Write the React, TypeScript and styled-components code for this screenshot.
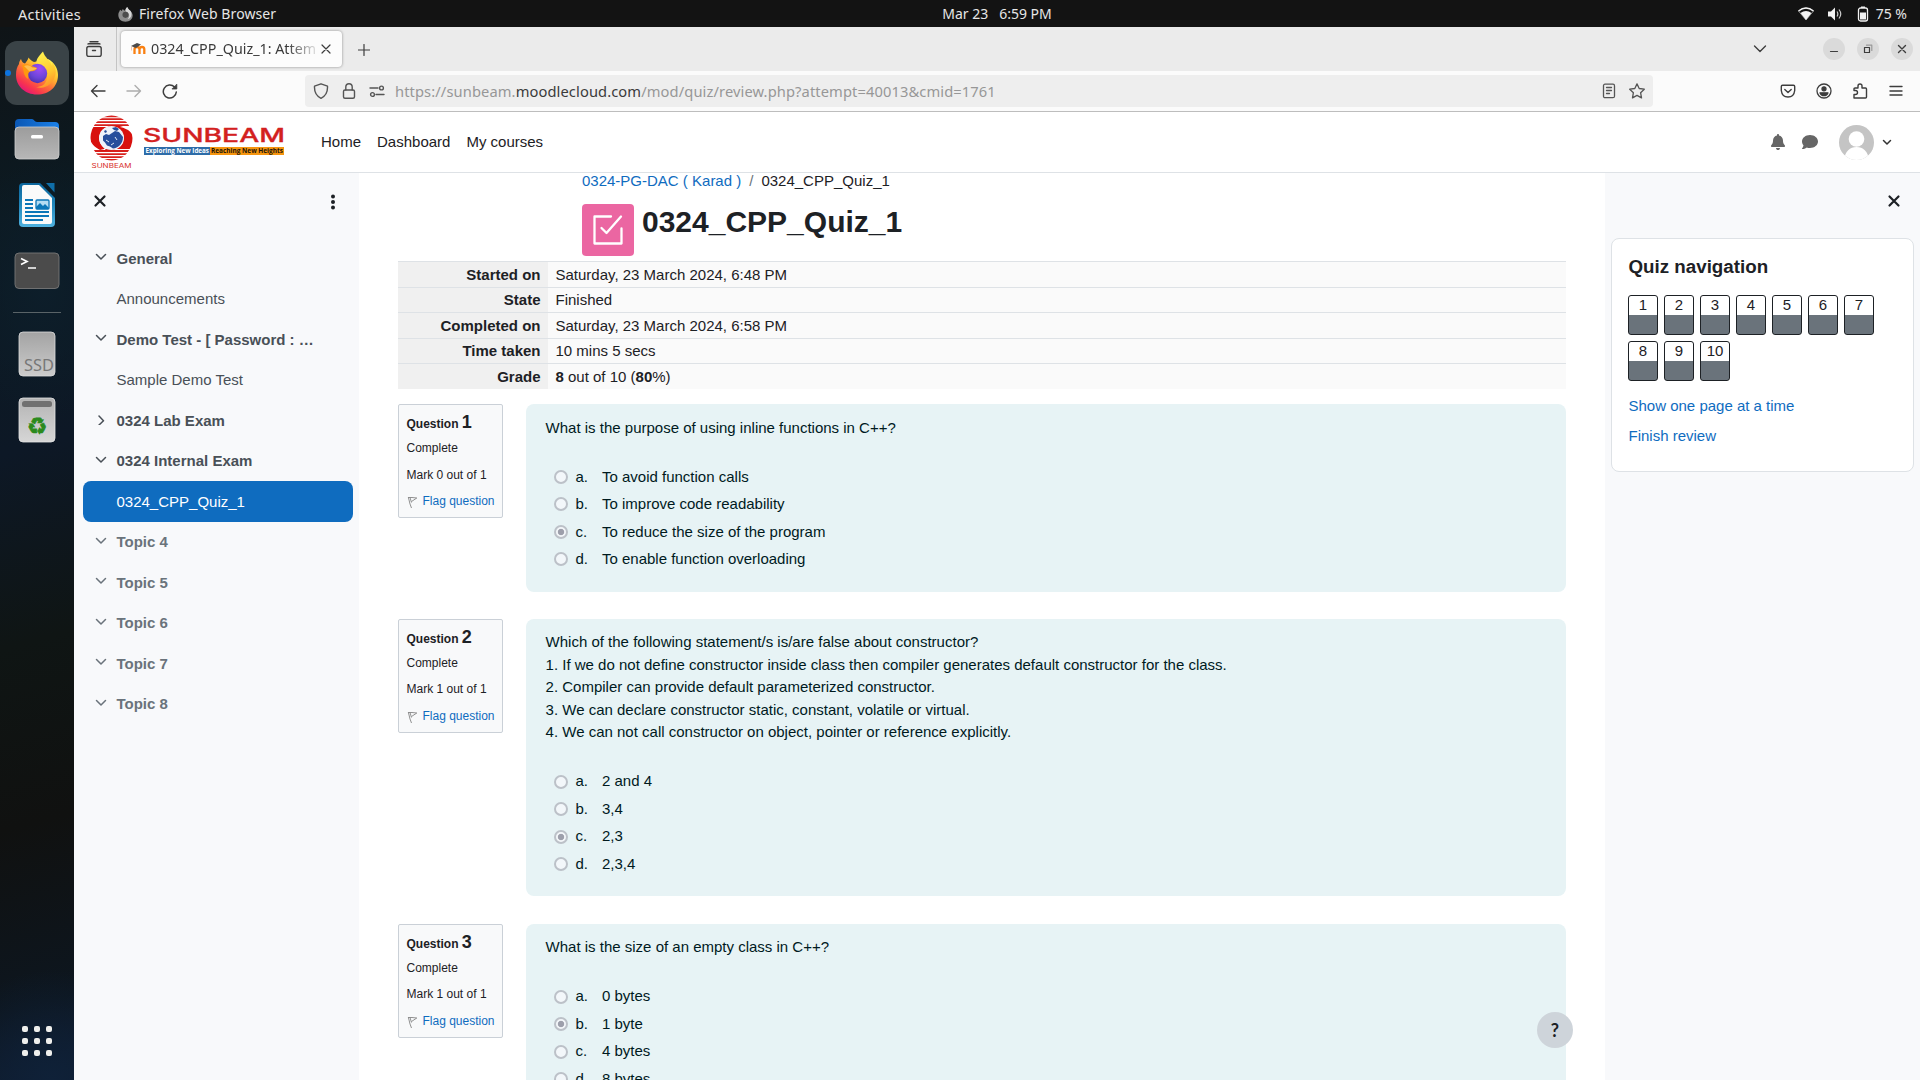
import React from "react";
import styled, { createGlobalStyle, css } from "styled-components";
import { FaBell, FaComment } from "react-icons/fa6";

const GlobalStyle = createGlobalStyle`
  * { box-sizing: border-box; }
  html, body { margin: 0; padding: 0; }
  body {
    font-family: "Liberation Sans", Arial, sans-serif;
    font-size: 15px;
    line-height: 22.5px;
    color: #1d2125;
    background: #fff;
    overflow: hidden;
  }
`;

const uiFont = css`
  font-family: "Noto Sans", "Open Sans", sans-serif;
  white-space: pre;
`;

/* ---------- desktop ---------- */

const Desktop = styled.div`
  width: 1920px;
  height: 1080px;
  display: flex;
  flex-direction: column;
  overflow: hidden;
`;

const TopBar = styled.header`
  ${uiFont}
  height: 27px;
  flex: none;
  display: grid;
  grid-template-columns: 1fr auto 1fr;
  align-items: center;
  padding: 1px 13px 0 18px;
  background: #131313;
  color: #e6e6e6;
  font-size: 14px;
`;

const TopBarGroup = styled.div<{ $gap: number; $end?: boolean }>`
  display: flex;
  align-items: center;
  gap: ${(p) => p.$gap}px;
  justify-content: ${(p) => (p.$end ? "flex-end" : "flex-start")};
  height: 26px;
`;

const TopLabel = styled.span<{ $spacing?: number; $size?: number }>`
  font-size: ${(p) => p.$size ?? 14}px;
  letter-spacing: ${(p) => p.$spacing ?? 0}px;
`;

/* The clock is centred over the area to the right of the dock. */
const Clock = styled(TopLabel)`
  padding-left: 69px;
`;

const AppName = styled.span`
  display: flex;
  align-items: center;
  gap: 6px;
`;

const Body = styled.div`
  flex: 1;
  min-height: 0;
  display: flex;
`;

const Dock = styled.nav`
  width: 74px;
  flex: none;
  display: flex;
  flex-direction: column;
  align-items: center;
  padding: 14px 0 21px;
  background:
    radial-gradient(ellipse 90px 130px at 60% 25%, #0d1e2a 0%, transparent 100%),
    radial-gradient(ellipse 110px 110px at 70% 100%, #0f2138 0%, transparent 100%),
    linear-gradient(165deg, #0f1417 0%, #0c1a22 18%, #0d1826 40%, #0f1514 58%, #101110 75%, #0d161f 92%, #0e1c30 100%);
`;

const DockTile = styled.div<{ $active?: boolean }>`
  position: relative;
  width: 64px;
  height: ${(p) => (p.$active ? 64 : 66)}px;
  margin-bottom: ${(p) => (p.$active ? 1 : 0)}px;
  display: flex;
  align-items: center;
  justify-content: center;
  border-radius: 12px;
  background: ${(p) => (p.$active ? "#3a4347" : "transparent")};
`;

const RunningDot = styled.i`
  position: absolute;
  left: 0;
  top: 29px;
  width: 6px;
  height: 6px;
  border-radius: 50%;
  background: #0c73df;
`;

const DockDivider = styled.hr`
  width: 48px;
  height: 1px;
  margin: 8px 0;
  border: 0;
  background: #596367;
`;

const AppGrid = styled.div`
  margin-top: auto;
  display: grid;
  grid-template-columns: repeat(3, 6px);
  gap: 6px;
  padding-bottom: 3px;
`;

const AppDot = styled.i`
  width: 6px;
  height: 6px;
  border-radius: 2px;
  background: #efefec;
`;

/* ---------- browser ---------- */

const Browser = styled.div`
  flex: 1;
  min-width: 0;
  display: flex;
  flex-direction: column;
`;

const TabStrip = styled.div`
  ${uiFont}
  height: 44px;
  flex: none;
  display: flex;
  align-items: center;
  background: #ebebeb;
  color: #3a3a3a;
`;

const ViewCell = styled.div`
  width: 43px;
  height: 44px;
  display: flex;
  align-items: center;
  padding-left: 12px;
  border-right: 1px solid #c4c4c4;
`;

const Tab = styled.div`
  width: 221px;
  height: 36px;
  margin-left: 4px;
  display: flex;
  align-items: center;
  padding: 0 9px;
  border-radius: 4px;
  background: #fcfcfc;
  box-shadow: 0 0 3px rgba(0, 0, 0, 0.4);
`;

const TabTitle = styled.span`
  width: 170px;
  flex: none;
  margin-left: 5px;
  padding-top: 1px;
  font-size: 14.3px;
  mask-image: linear-gradient(to left, transparent, #000 34px);
`;

const Spacer = styled.div`
  flex: 1;
`;

const WindowControls = styled.div`
  display: flex;
  gap: 12px;
  margin: 0 7px 0 56px;
`;

const WindowButton = styled.span`
  width: 22px;
  height: 22px;
  border-radius: 50%;
  background: #dadada;
  display: flex;
  align-items: center;
  justify-content: center;
`;

const NewTab = styled.span`
  display: flex;
  margin: 1px 0 0 16px;
`;

const Toolbar = styled.div`
  ${uiFont}
  height: 41px;
  flex: none;
  display: flex;
  align-items: center;
  padding: 0 16px;
  background: #fbfbfb;
  border-bottom: 1px solid #bdbdbd;
`;

const ToolGroup = styled.div`
  display: flex;
  gap: 20px;
`;

const UrlBar = styled.div`
  width: 1348px;
  height: 32px;
  margin: 0 127px;
  display: flex;
  align-items: center;
  gap: 12px;
  padding: 0 8px;
  border-radius: 4px;
  background: #eeeeee;
`;

const Url = styled.span`
  flex: 1;
  margin-left: -2px;
  padding-top: 1px;
  font-size: 14.7px;
  letter-spacing: 0.1px;
  color: #979797;
  b { font-weight: 400; color: #3b3b3b; }
`;

/* ---------- moodle page ---------- */

const Page = styled.div`
  flex: 1;
  min-height: 0;
  display: flex;
  flex-direction: column;
  position: relative;
`;

const Navbar = styled.div`
  height: 61px;
  flex: none;
  display: flex;
  align-items: center;
  padding: 0 28px 0 16px;
  border-bottom: 1px solid #dee2e6;
  background: #fff;
`;

const Brand = styled.div`
  display: flex;
  gap: 9px;
`;

const NavLinks = styled.nav`
  display: flex;
  gap: 16px;
  margin-left: 35px;
`;

const NavIcons = styled.div`
  margin-left: auto;
  display: flex;
  align-items: center;
  color: #666;
`;

const NavIcon = styled.span<{ $right: number }>`
  display: flex;
  margin-right: ${(p) => p.$right}px;
`;

const Columns = styled.div`
  flex: 1;
  min-height: 0;
  display: flex;
`;

const Drawer = styled.aside<{ $width: number }>`
  width: ${(p) => p.$width}px;
  flex: none;
  background: #f8f9fb;
`;

const DrawerHead = styled.div<{ $end?: boolean }>`
  height: 65px;
  display: flex;
  align-items: flex-start;
  justify-content: ${(p) => (p.$end ? "flex-end" : "space-between")};
  padding: ${(p) => (p.$end ? "20px 18px 0 0" : "20px 18px 0 18px")};
`;

const CourseIndex = styled.div`
  padding: 0 6px 0 9px;
`;

const IndexItem = styled.div<{ $bold?: boolean; $dim?: boolean; $active?: boolean }>`
  height: 40.5px;
  display: flex;
  align-items: center;
  padding: 1px 0 0 12px;
  border-radius: 8px;
  background: ${(p) => (p.$active ? "#0f6cbf" : "transparent")};
  color: ${(p) => (p.$active ? "#fff" : p.$dim ? "#6a737b" : "#495057")};
  font-weight: ${(p) => (p.$bold ? 700 : 400)};
`;

const ChevronSlot = styled.span`
  width: 21.5px;
  display: flex;
  margin-top: -3px;
`;

const Main = styled.main`
  flex: 1;
  min-width: 0;
  overflow: hidden;
  padding: 0 39px;
`;

const HeadBlock = styled.div`
  padding-left: 184px;
  height: 88px;
`;

const Breadcrumb = styled.div`
  display: flex;
  gap: 8px;
  height: 31px;
  line-height: 15px;
`;

const Link = styled.a`
  color: #0f6cbf;
`;

const Slash = styled.span`
  color: #6a737b;
`;

const TitleRow = styled.div`
  display: flex;
  gap: 8px;
`;

const ActivityIcon = styled.span`
  width: 52px;
  height: 52px;
  border-radius: 4px;
  background: #eb66a2;
  display: flex;
  align-items: center;
  justify-content: center;
`;

const Title = styled.h1`
  margin: 0;
  font-size: 30px;
  line-height: 36px;
  font-weight: 700;
`;

const Summary = styled.div`
  display: grid;
  grid-template-columns: 150px 1fr;
  grid-auto-rows: 25.5px;
  margin-bottom: 15.7px;
`;

const SummaryCell = styled.div<{ $label?: boolean }>`
  padding: 1.5px 7.5px 0;
  border-top: 1px solid #dee2e6;
  background: ${(p) => (p.$label ? "#f0f0f0" : "#fafafa")};
  text-align: ${(p) => (p.$label ? "right" : "left")};
  font-weight: ${(p) => (p.$label ? 700 : 400)};
`;

const QuestionRow = styled.section`
  display: flex;
  align-items: flex-start;
  gap: 23px;
  margin-bottom: 27.3px;
`;

const Info = styled.div`
  width: 105px;
  height: 114px;
  flex: none;
  padding: 6px 7.5px;
  border: 1px solid #cad0d7;
  border-radius: 2px;
  background: #f8f9fa;
  font-size: 12px;
  line-height: 18px;
  white-space: nowrap;
`;

const InfoNumber = styled.h3`
  margin: 0;
  height: 28px;
  font-size: 12px;
  line-height: 22px;
  b { font-size: 18px; }
`;

const InfoLine = styled.div`
  height: 26.5px;
  display: flex;
  align-items: flex-start;
  gap: 5px;
`;

const FlagSlot = styled.span`
  display: flex;
  padding-top: 4px;
`;

const Formulation = styled.div`
  flex: 1;
  min-width: 0;
  padding: 12.5px 20px 18.5px 19.6px;
  border-radius: 8px;
  background: #e7f3f5;
  color: #001a1e;
`;

const Prompt = styled.div`
  margin-bottom: 24px;
`;

const Option = styled.div`
  height: 27.5px;
  display: flex;
  align-items: center;
  padding-left: 8.4px;
`;

const Radio = styled.span<{ $on: boolean }>`
  width: 14px;
  height: 14px;
  margin-right: 7.5px;
  border-radius: 50%;
  border: 2px solid #bcc1c8;
  background: ${(p) => (p.$on ? "radial-gradient(circle, #9d9fab 2.8px, #f3f6f9 3.6px)" : "#f3f7fa")};
`;

const OptionLetter = styled.span`
  width: 26.5px;
`;

const NavCard = styled.div`
  width: 303px;
  height: 234px;
  margin-left: 6px;
  padding: 17px 16px;
  border: 1px solid #dee2e6;
  border-radius: 8px;
  background: #fff;
`;

const NavTitle = styled.h5`
  margin: 0 0 16px;
  padding-left: 0.5px;
  font-size: 18.75px;
  line-height: 22.5px;
`;

const NavGrid = styled.div`
  display: grid;
  grid-template-columns: repeat(7, 30px);
  gap: 6px;
  margin-bottom: 14px;
`;

const NavButton = styled.span`
  height: 40px;
  border: 1px solid #1d2125;
  border-radius: 3px;
  text-align: center;
  line-height: 18.5px;
  background: linear-gradient(#fff 19px, #6a737b 19px);
`;

const NavLinkRow = styled.div`
  height: 30px;
  padding-left: 0.5px;
`;

const HelpButton = styled.span`
  position: absolute;
  left: 1463px;
  top: 900px;
  width: 36px;
  height: 36px;
  border-radius: 50%;
  background: #ced4da;
  color: #1d2125;
  font: 700 18px/36px "Lato", sans-serif;
  text-align: center;
`;

/* ---------- drawings ---------- */

const Line = ({ size = 16, d, color = "#3d3d3d", w = 1.2, children }: {
  size?: number; d?: string; color?: string; w?: number; children?: React.ReactNode;
}) => (
  <svg width={size} height={size} viewBox={`0 0 ${size} ${size}`} fill="none" stroke={color} strokeWidth={w} strokeLinecap="round" strokeLinejoin="round">
    {d && <path d={d} />}
    {children}
  </svg>
);

const FirefoxIcon = () => (
  <svg width="44" height="44" viewBox="0 0 44 44">
    <defs>
      <linearGradient id="ffBody" x1="0.85" y1="0.1" x2="0.2" y2="0.95">
        <stop offset="0" stopColor="#fff34f" />
        <stop offset="0.3" stopColor="#ffbe2e" />
        <stop offset="0.55" stopColor="#ff7139" />
        <stop offset="0.8" stopColor="#f8364d" />
        <stop offset="1" stopColor="#e3147b" />
      </linearGradient>
      <radialGradient id="ffGlobe" cx="0.6" cy="0.25" r="0.8">
        <stop offset="0" stopColor="#a04bf5" />
        <stop offset="0.6" stopColor="#6b45d8" />
        <stop offset="1" stopColor="#4a2fae" />
      </radialGradient>
      <linearGradient id="ffFlame" x1="0.4" y1="0" x2="0.7" y2="1">
        <stop offset="0" stopColor="#fff04d" />
        <stop offset="0.6" stopColor="#ffc62f" />
        <stop offset="1" stopColor="#ff8b2b" />
      </linearGradient>
    </defs>
    <path d="M6 8c1 3 2 4 4 4.500C12 10 13 8.500 13.500 6.500C15 9 17 10 19 11L33 8C40 12 43 18 43 24C43 36 34 43.500 22 43.500C10 43.500 1 35 1 24C1 19 2 16 4 13C4 11 5 9 6 8Z" fill="url(#ffBody)" />
    <path d="M28 0.500C25 4 20.500 8 21.500 13C25 14 33 18 32 27C31 34 26 36 21 36C30 39 38 33 40 25C42 20 40 15 37 11C37.500 13 37.500 14 37 15C35 9 30 7 28 0.500Z" fill="url(#ffFlame)" />
    <circle cx="22.500" cy="22.500" r="9.700" fill="url(#ffGlobe)" />
    <path d="M7 14C11 12.500 14 13 16 15C18 15.500 20 16 22 17C21 20 18 20 15 20.500C12 22 14 26 13 28C8 25 9 19 7 14Z" fill="#ff980e" />
    <path d="M9 15C13 13 16 15 17 16.500L22 17C20 19.500 16 19 14.500 20.500Z" fill="#ffbd4f" />
  </svg>
);

const FirefoxMono = () => (
  <svg width="15" height="15" viewBox="0 0 44 44">
    <path d="M6 8L11 12L14 6L19 11L27 0C30 8 43 14 43 24C43 36 34 43 22 43S1 35 1 24C1 19 2 16 4 13Z" fill="#8d8d8d" />
    <path d="M27 0C21 5 22 12 25 14C36 20 34 30 28 36C40 33 42 22 37 12C34 9 29 6 27 0Z" fill="#d9d9d9" />
    <circle cx="22" cy="23" r="9" fill="#4c4c4c" />
  </svg>
);

const FilesIcon = () => (
  <svg width="46" height="42" viewBox="0 0 46 42">
    <defs>
      <linearGradient id="fold" x1="0" y1="0" x2="0" y2="1"><stop offset="0" stopColor="#9c9c9c" /><stop offset="1" stopColor="#b7b7b7" /></linearGradient>
      <linearGradient id="foldBack" x1="0" y1="0" x2="1" y2="0"><stop offset="0" stopColor="#0b57b4" /><stop offset="1" stopColor="#1a80e8" /></linearGradient>
    </defs>
    <path d="M1 5a4 4 0 0 1 4-4h13c2 0 2.500 3 5 3h18a4 4 0 0 1 4 4v12H1z" fill="url(#foldBack)" />
    <rect x="1" y="9" width="44" height="32" rx="4" fill="url(#fold)" stroke="#cfcfcf" strokeWidth="0.800" />
    <rect x="17" y="17" width="12" height="3.500" rx="1.500" fill="#fff" />
  </svg>
);

const WriterIcon = () => (
  <svg width="38" height="46" viewBox="0 0 38 46">
    <defs><linearGradient id="wr" x1="0" y1="0" x2="0" y2="1"><stop offset="0" stopColor="#0b659c" /><stop offset="0.500" stopColor="#2187bb" /><stop offset="1" stopColor="#4fb2e0" /></linearGradient></defs>
    <path d="M5 1H22L37 16V41a4 4 0 0 1-4 4H5a4 4 0 0 1-4-4V5a4 4 0 0 1 4-4Z" fill="url(#wr)" />
    <path d="M28 1h8.500v9.500z" fill="#0f6ea8" />
    <path d="M6 3H21L34 16V40a2 2 0 0 1-2 2H6a2 2 0 0 1-2-2V5a2 2 0 0 1 2-2Z" fill="#fafafa" />
    <path d="M7 18h8M7 22h8M7 26h8M7 30h24M7 34h24M7 38h18" stroke="#0b76b8" strokeWidth="1.800" />
    <rect x="18" y="18" width="13" height="9" rx="1" fill="#b5dcf2" stroke="#0b76b8" strokeWidth="1.300" />
    <path d="M18 27v-2l4-4 3 3 2-2 4 4v1z" fill="#0b76b8" />
  </svg>
);

const TerminalIcon = () => (
  <svg width="46" height="38" viewBox="0 0 46 38">
    <rect x="1" y="1" width="44" height="35.500" rx="4" fill="#4b4b4b" stroke="#777" strokeWidth="0.900" />
    <path d="M7 6.500l6 3-6 3M14 16h8" stroke="#fff" strokeWidth="1.700" fill="none" />
  </svg>
);

const SsdIcon = () => (
  <svg width="38" height="46" viewBox="0 0 38 46">
    <defs><linearGradient id="ssd" x1="0" y1="0" x2="0" y2="1"><stop offset="0" stopColor="#a3a3a3" /><stop offset="1" stopColor="#cccccc" /></linearGradient></defs>
    <rect x="1" y="1" width="36" height="44" rx="4" fill="url(#ssd)" stroke="#dcdcdc" strokeWidth="0.800" />
    <text x="6" y="39.500" textLength="30" lengthAdjust="spacingAndGlyphs" fontFamily="Noto Sans, sans-serif" fontSize="15.500" fill="#777">SSD</text>
  </svg>
);

const TrashIcon = () => (
  <svg width="38" height="46" viewBox="0 0 38 46">
    <defs><linearGradient id="tr" x1="0" y1="0" x2="0" y2="1"><stop offset="0" stopColor="#b4b4b4" /><stop offset="1" stopColor="#d6d6d6" /></linearGradient></defs>
    <rect x="1" y="1" width="36" height="44" rx="4" fill="url(#tr)" stroke="#e4e4e4" strokeWidth="0.800" />
    <rect x="4" y="4" width="30" height="6" rx="2.500" fill="#717171" />
    <text x="19" y="37" textAnchor="middle" fontFamily="DejaVu Sans, sans-serif" fontSize="23" fill="#2a8a1c" stroke="#2a8a1c" strokeWidth="0.700">♻</text>
  </svg>
);

const MoodleFavicon = () => (
  <svg width="16" height="16" viewBox="0 0 16 16">
    <path d="M4.500 13V8.500Q4.500 6 7 6T9.500 8.500V13M9.500 8.500Q9.500 6 12 6T14.300 8.500V13" fill="none" stroke="#f98012" strokeWidth="2.300" />
    <path d="M1 5L7 2l4 1.500L6 7z" fill="#4a4a4a" />
    <path d="M1.500 5.500v4" stroke="#e8b89a" strokeWidth="0.800" />
  </svg>
);

const Emblem = () => (
  <svg width="43" height="54" viewBox="0 0 43 54">
    <defs><clipPath id="disc"><ellipse cx="21.500" cy="23" rx="21" ry="22.500" /></clipPath></defs>
    <g clipPath="url(#disc)">
      <path d="M0 0H43V2.300H0zM0 3.300H43V5H0zM0 6.200H43V8H0zM0 9.300H43V11H0zM0 35H43V37H0zM0 38.200H43V40H0zM0 41.200H43V43H0zM0 44H43V46H0z" fill="#d8201c" />
      <path d="M0 12H33C24 9 15 11 11 17C7 24 10 30 17 36H12C4 32 0 28 0 22ZM43 34H10C19 37 28 35 32 29C36 22 33 16 26 12H30C39 14 43 18 43 24Z" fill="#d8110e" />
    </g>
    <ellipse cx="21.500" cy="23" rx="12.500" ry="12" fill="#eef3fa" />
    <path d="M13 21l3-2 3 1 3-2 3-2 4 1 4 5c0 7-5 11-10 11.500l-3-2-3-1-2-3-2-2zM22 13l4-1 3 2-2 2-3-1zM14 16l2-1 1 2-2 1z" fill="#274f9c" />
    <path d="M16 25l3 2M25 22l2 3M21 30l3-2" stroke="#dfe8f6" strokeWidth="1" />
    <text x="1.500" y="52.500" textLength="40" lengthAdjust="spacingAndGlyphs" fontFamily="Inter, sans-serif" fontSize="6.200" fill="#d8302b">SUNBEAM</text>
  </svg>
);

const Wordmark = () => (
  <svg width="144" height="54" viewBox="0 0 144 54">
    <text x="1" y="27.300" textLength="142" lengthAdjust="spacingAndGlyphs" fontFamily="Inter, sans-serif" fontWeight="500" fontSize="18.800" fill="#d3211f" stroke="#d3211f" strokeWidth="0.300">SUNBEAM</text>
    <rect x="2" y="32" width="66" height="8" fill="#2d6ca8" />
    <rect x="68" y="32" width="74" height="8" fill="#f5950f" />
    <text x="3.500" y="38.300" textLength="63.500" lengthAdjust="spacingAndGlyphs" fontFamily="Open Sans, sans-serif" fontWeight="700" fontSize="6.800" fill="#fff">Exploring New Ideas</text>
    <text x="69" y="38.300" textLength="72" lengthAdjust="spacingAndGlyphs" fontFamily="Open Sans, sans-serif" fontWeight="700" fontSize="6.800" fill="#1c1408">Reaching New Heights</text>
  </svg>
);

const Avatar = () => (
  <svg width="35" height="35" viewBox="0 0 35 35">
    <defs><clipPath id="av"><circle cx="17.500" cy="17.500" r="17.500" /></clipPath></defs>
    <g clipPath="url(#av)">
      <rect width="35" height="35" fill="#c4c4c4" />
      <circle cx="17.500" cy="14" r="7.800" fill="#fff" />
      <path d="M5 35C6 26 11 22 17.500 22S29 26 30 35Z" fill="#fff" />
    </g>
  </svg>
);

const QuizGlyph = () => (
  <svg width="32" height="32" viewBox="0 0 32 32" fill="none" stroke="#fff" strokeWidth="2.300" strokeLinecap="round" strokeLinejoin="round">
    <path d="M19 2.500H2.500V29.500H29.500V14.500M9.500 14L14.500 19L29 2.500" />
  </svg>
);

const FlagIcon = () => (
  <svg width="11" height="13" viewBox="0 0 11 13" fill="none" stroke="#858585" strokeWidth="0.900">
    <path d="M1.300 1L3 8L4.500 12M3 1.500L4.500 6.500M1.300 1.500H5L9.800 2L4.500 5.500" />
  </svg>
);

const CloseX = () => <Line size={16} w={2.2} color="#1d2125" d="M3.500 3.500L12.500 12.500M12.500 3.500L3.500 12.500" />;
const ChevDown = ({ color }: { color: string }) => <Line size={12} w={1.5} color={color} d="M1.500 3.500L6 8L10.500 3.500" />;
const ChevRight = ({ color }: { color: string }) => <Line size={12} w={1.5} color={color} d="M4 3L8.500 7.700L4 12" />;

/* ---------- data ---------- */

type Item = { label: string; chev?: "down" | "right"; dim?: boolean; active?: boolean };
const items: Item[] = [
  { label: "General", chev: "down" },
  { label: "Announcements" },
  { label: "Demo Test - [ Password : …", chev: "down" },
  { label: "Sample Demo Test" },
  { label: "0324 Lab Exam", chev: "right" },
  { label: "0324 Internal Exam", chev: "down" },
  { label: "0324_CPP_Quiz_1", active: true },
  ...[4, 5, 6, 7, 8].map((n): Item => ({ label: `Topic ${n}`, chev: "down", dim: true })),
];

const summary: [string, React.ReactNode][] = [
  ["Started on", "Saturday, 23 March 2024, 6:48 PM"],
  ["State", "Finished"],
  ["Completed on", "Saturday, 23 March 2024, 6:58 PM"],
  ["Time taken", "10 mins 5 secs"],
  ["Grade", <><b>8</b> out of 10 (<b>80</b>%)</>],
];

const questions = [
  {
    mark: 0,
    text: ["What is the purpose of using inline functions in C++?"],
    options: ["To avoid function calls", "To improve code readability", "To reduce the size of the program", "To enable function overloading"],
    chosen: 2,
  },
  {
    mark: 1,
    text: [
      "Which of the following statement/s is/are false about constructor?",
      "1. If we do not define constructor inside class then compiler generates default constructor for the class.",
      "2. Compiler can provide default parameterized constructor.",
      "3. We can declare constructor static, constant, volatile or virtual.",
      "4. We can not call constructor on object, pointer or reference explicitly.",
    ],
    options: ["2 and 4", "3,4", "2,3", "2,3,4"],
    chosen: 2,
  },
  {
    mark: 1,
    text: ["What is the size of an empty class in C++?"],
    options: ["0 bytes", "1 byte", "4 bytes", "8 bytes"],
    chosen: 1,
  },
];

export default function App() {
  return (
    <Desktop>
      <GlobalStyle />
      <TopBar>
        <TopBarGroup $gap={37}>
          <TopLabel $size={14.5} $spacing={0.25}>Activities</TopLabel>
          <AppName><FirefoxMono /><TopLabel $spacing={0.1}>Firefox Web Browser</TopLabel></AppName>
        </TopBarGroup>
        <Clock>Mar 23   6:59 PM</Clock>
        <TopBarGroup $gap={13} $end>
          <svg width="16" height="14" viewBox="0 0 16 14"><path d="M8 13L0.500 4Q8-2 15.500 4Z" fill="none" stroke="#888" /><path d="M8 13L2.500 6Q8 2 13.500 6Z" fill="#f2f2f2" /><path d="M0.500 4Q8-2 15.500 4" stroke="#f2f2f2" strokeWidth="1.500" fill="none" /></svg>
          <svg width="16" height="14" viewBox="0 0 16 14"><path d="M1 4.500h3L8 0.500v13L4 9.500H1z" fill="#f2f2f2" /><path d="M10 4.500q1.700 2.500 0 5M12 2.500q3.500 4.500 0 9" stroke="#ccc" strokeWidth="1.200" fill="none" /></svg>
          <AppName>
            <svg width="14" height="16" viewBox="0 0 14 16"><rect x="2.500" y="2" width="9" height="13" rx="2" fill="none" stroke="#f2f2f2" strokeWidth="1.300" /><path d="M5 0.500h4v1.500H5zM4 6.500h6v7H4z" fill="#f2f2f2" /></svg>
            <TopLabel>75 %</TopLabel>
          </AppName>
        </TopBarGroup>
      </TopBar>
      <Body>
        <Dock>
          <DockTile $active><RunningDot /><FirefoxIcon /></DockTile>
          <DockTile><FilesIcon /></DockTile>
          <DockTile><WriterIcon /></DockTile>
          <DockTile><TerminalIcon /></DockTile>
          <DockDivider />
          <DockTile><SsdIcon /></DockTile>
          <DockTile><TrashIcon /></DockTile>
          <AppGrid>{Array.from({ length: 9 }, (_, i) => <AppDot key={i} />)}</AppGrid>
        </Dock>
        <Browser>
          <TabStrip>
            <ViewCell>
              <Line w={1.4}><rect x="0.800" y="5.500" width="14.400" height="10" rx="2" /><path d="M2 3Q2 2.800 3 2.800H13Q14 2.800 14 3M4 0.700H12M6.500 9.500H9.500" /></Line>
            </ViewCell>
            <Tab>
              <MoodleFavicon />
              <TabTitle>0324_CPP_Quiz_1: Attem</TabTitle>
              <Line size={10} d="M1 1L9 9M9 1L1 9" />
            </Tab>
            <NewTab><Line size={12} d="M6 0.500V11.500M0.500 6H11.500" /></NewTab>
            <Spacer />
            <Line size={14} w={1.4} d="M1.500 4L7 9.500L12.500 4" />
            <WindowControls>
              <WindowButton><Line size={10} w={1.2} d="M1.500 7.500H8.500" /></WindowButton>
              <WindowButton><Line size={10} w={1.2}><path d="M1.500 3.500H6.500V8.500H1.500Z" /><path d="M3.500 1.200H8.800V6.500" stroke="#999" /></Line></WindowButton>
              <WindowButton><Line size={10} w={1.4} d="M1.500 1.500L8.500 8.500M8.500 1.500L1.500 8.500" /></WindowButton>
            </WindowControls>
          </TabStrip>
          <Toolbar>
            <ToolGroup>
              <Line w={1.4} d="M15 8H1.500M7 2.500L1.500 8L7 13.500" />
              <Line w={1.4} color="#adadad" d="M1 8H14.500M9 2.500L14.500 8L9 13.500" />
              <Line w={1.5}><path d="M14.300 9A6.500 6.500 0 1 1 12.500 4" /><path d="M14.800 1.500V6H10.300Z" fill="#3d3d3d" strokeWidth="0.800" /></Line>
            </ToolGroup>
            <UrlBar>
              <Line w={1.4} color="#555" d="M8 0.800L14.500 3.200Q15 12 8 15.300Q1 12 1.500 3.200Z" />
              <Line w={1.4} color="#555"><rect x="2.500" y="7" width="11" height="8.300" rx="1.500" /><path d="M4.800 7V4Q4.800 0.800 8 0.800T11.200 4V7" /></Line>
              <Line w={1.4} color="#555"><path d="M1 5H9M7 11.500H15" /><circle cx="12.500" cy="5" r="1.900" /><circle cx="3.500" cy="11.500" r="1.900" /></Line>
              <Url>https://sunbeam.<b>moodlecloud.com</b>/mod/quiz/review.php?attempt=40013&amp;cmid=1761</Url>
              <Line w={1.3} color="#555"><rect x="2.500" y="1.200" width="11" height="13.500" rx="1.500" /><path d="M5.500 4.500H10.500M5.500 7.500H10.500M5.500 10.500H8.500" /></Line>
              <Line w={1.3} color="#555" d="M8 0.900L10.200 5.500L15.300 6.200L11.600 9.700L12.500 14.900L8 12.400L3.500 14.900L4.400 9.700L0.700 6.200L5.800 5.500Z" />
            </UrlBar>
            <ToolGroup>
              <Line w={1.4} d="M2.500 2.200H13.500Q14.700 2.200 14.700 3.500V7.500Q14 14 8 14Q2 14 1.300 7.500V3.500Q1.300 2.200 2.500 2.200ZM4.800 6.500L8 9.500L11.200 6.500" />
              <Line w={1.3}><circle cx="8" cy="8" r="7" /><circle cx="8" cy="5.800" r="2" fill="#3d3d3d" /><path d="M4 9.800H12Q11 12.700 8 12.700T4 9.800Z" fill="#3d3d3d" /></Line>
              <Line w={1.4} d="M2.500 15H13.500Q14.500 15 14.500 14V6Q14.500 5 13.500 5H10V3Q10 1 8 1T6 3V5H3Q2 5 2 6V7.500H3.500Q5.500 7.500 5.500 9.500T3.500 11.500H2V15Z" />
              <Line w={1.4} d="M2 3.500H14M2 8H14M2 12H14" />
            </ToolGroup>
          </Toolbar>
          <Page>
            <Navbar>
              <Brand><Emblem /><Wordmark /></Brand>
              <NavLinks><span>Home</span><span>Dashboard</span><span>My courses</span></NavLinks>
              <NavIcons>
                <NavIcon $right={16}><FaBell size={16} /></NavIcon>
                <NavIcon $right={21}><FaComment size={16} /></NavIcon>
                <NavIcon $right={8}><Avatar /></NavIcon>
                <Line size={10} w={1.5} color="#333" d="M1.500 3.500L5 7L8.500 3.500" />
              </NavIcons>
            </Navbar>
            <Columns>
              <Drawer $width={285}>
                <DrawerHead>
                  <CloseX />
                  <svg width="16" height="18" viewBox="0 0 16 18" fill="#1d2125"><circle cx="8" cy="3.500" r="2" /><circle cx="8" cy="9" r="2" /><circle cx="8" cy="14.500" r="2" /></svg>
                </DrawerHead>
                <CourseIndex>
                  {items.map((it) => {
                    const color = it.dim ? "#6a737b" : "#495057";
                    return (
                      <IndexItem key={it.label} $bold={!!it.chev} $dim={it.dim} $active={it.active}>
                        <ChevronSlot>
                          {it.chev === "down" && <ChevDown color={color} />}
                          {it.chev === "right" && <ChevRight color={color} />}
                        </ChevronSlot>
                        {it.label}
                      </IndexItem>
                    );
                  })}
                </CourseIndex>
              </Drawer>
              <Main>
                <HeadBlock>
                  <Breadcrumb><Link>0324-PG-DAC ( Karad )</Link><Slash>/</Slash><span>0324_CPP_Quiz_1</span></Breadcrumb>
                  <TitleRow>
                    <ActivityIcon><QuizGlyph /></ActivityIcon>
                    <Title>0324_CPP_Quiz_1</Title>
                  </TitleRow>
                </HeadBlock>
                <Summary>
                  {summary.map(([k, v]) => (
                    <React.Fragment key={k}>
                      <SummaryCell $label>{k}</SummaryCell>
                      <SummaryCell>{v}</SummaryCell>
                    </React.Fragment>
                  ))}
                </Summary>
                {questions.map((q, i) => (
                  <QuestionRow key={i}>
                    <Info>
                      <InfoNumber>Question <b>{i + 1}</b></InfoNumber>
                      <InfoLine>Complete</InfoLine>
                      <InfoLine>Mark {q.mark} out of 1</InfoLine>
                      <InfoLine><FlagSlot><FlagIcon /></FlagSlot><Link>Flag question</Link></InfoLine>
                    </Info>
                    <Formulation>
                      <Prompt>{q.text.map((t) => <div key={t}>{t}</div>)}</Prompt>
                      {q.options.map((o, j) => (
                        <Option key={o}>
                          <Radio $on={j === q.chosen} />
                          <OptionLetter>{"abcd"[j]}.</OptionLetter>
                          {o}
                        </Option>
                      ))}
                    </Formulation>
                  </QuestionRow>
                ))}
              </Main>
              <Drawer $width={315}>
                <DrawerHead $end><CloseX /></DrawerHead>
                <NavCard>
                  <NavTitle>Quiz navigation</NavTitle>
                  <NavGrid>{Array.from({ length: 10 }, (_, i) => <NavButton key={i}>{i + 1}</NavButton>)}</NavGrid>
                  <NavLinkRow><Link>Show one page at a time</Link></NavLinkRow>
                  <NavLinkRow><Link>Finish review</Link></NavLinkRow>
                </NavCard>
              </Drawer>
            </Columns>
            <HelpButton>?</HelpButton>
          </Page>
        </Browser>
      </Body>
    </Desktop>
  );
}
